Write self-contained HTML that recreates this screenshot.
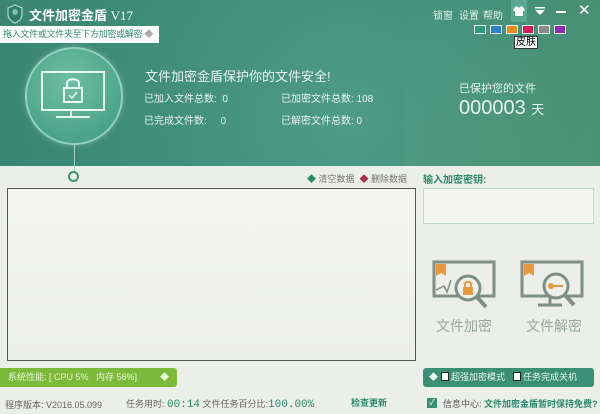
<!DOCTYPE html><html><head><meta charset="utf-8"><style>
*{margin:0;padding:0;box-sizing:border-box}
body{width:600px;height:414px;overflow:hidden;font-family:"Liberation Sans","Noto Sans CJK SC",sans-serif;background:#eceeea;position:relative;font-size:10px}
.a{position:absolute;white-space:nowrap}
.hdr{position:absolute;left:0;top:0;width:600px;height:166px;background:radial-gradient(circle at 350px 120px,#4f9c86 0,#3f8d77 60%,#3a8670 100%)}
.w{color:#e6f2ee}
.sw{position:absolute;top:25px;width:12px;height:9px;border:1px solid #e8f0ec}
</style></head><body>
<div class="hdr"></div>
<div class="a" style="left:404px;top:0;width:196px;height:166px;background:linear-gradient(120deg,rgba(255,255,255,0),rgba(120,170,120,.25))"></div>
<svg class="a" style="left:6px;top:4px" width="18" height="20" viewBox="0 0 18 20"><path d="M9 1L16 4V10C16 15 12 18 9 19C6 18 2 15 2 10V4Z" fill="#2f7d66" stroke="#a9d9c7" stroke-width="1.2"/><path d="M9 5C11 5 12 7 11.5 9C11 10.5 10 11 9 11C8 11 7 10.5 6.5 9C6 7 7 5 9 5Z" fill="#7fc4ab"/></svg>
<div class="a" style="left:29px;top:5px;font-size:13px;color:#fff;font-weight:bold">文件加密金盾 <span style="font-family:'Liberation Serif';font-weight:normal">V17</span></div>
<div class="a" style="left:0;top:26px;width:159px;height:17px;background:#fff;color:#2f8a6e;font-size:9px;line-height:17px;padding-left:3px;letter-spacing:-0.3px">拖入文件或文件夹至下方加密或解密 <span style="color:#aaa">◆</span></div>
<div class="a w" style="left:433px;top:7px;font-size:10px">锁窗</div>
<div class="a w" style="left:459px;top:7px;font-size:10px">设置</div>
<div class="a w" style="left:483px;top:7px;font-size:10px">帮助</div>
<div class="a" style="left:511px;top:0;width:16px;height:22px;background:#5aa890"></div>
<svg class="a" style="left:513px;top:6px" width="12" height="10" viewBox="0 0 12 10"><path d="M4 0L1 2L0 5L2 5V10H10V5L12 5L11 2L8 0C7 2 5 2 4 0Z" fill="#fff"/></svg>
<svg class="a" style="left:535px;top:7px" width="10" height="8" viewBox="0 0 10 8"><rect x="0" y="0" width="10" height="1.5" fill="#fff"/><path d="M0 3H10L5 8Z" fill="#fff"/></svg>
<div class="a" style="left:556px;top:11px;width:10px;height:2px;background:#fff"></div>
<div class="a w" style="left:578px;top:1px;font-size:15px;color:#fff">✕</div>
<div class="sw" style="left:474px;background:#2a9c7c"></div>
<div class="sw" style="left:490px;background:#2f7ec8"></div>
<div class="sw" style="left:506px;background:#e88a1c"></div>
<div class="sw" style="left:522px;background:#d61a5c"></div>
<div class="sw" style="left:538px;background:#8a8a8a"></div>
<div class="sw" style="left:554px;background:#8a2cb8"></div>
<div class="a" style="left:514px;top:36px;background:#fff;border:1px solid #333;font-size:10px;padding:0 1px;line-height:11px">皮肤</div>
<div class="a" style="left:74px;top:140px;width:1px;height:32px;background:#9fcfbf"></div>
<div class="a" style="left:68px;top:171px;width:11px;height:11px;border:2px solid #3f9479;border-radius:50%"></div>
<div class="a" style="left:25px;top:47px;width:98px;height:98px;border-radius:50%;background:radial-gradient(circle at 45% 35%,#6ebea3,#3e9a7e);border:2px solid #8ed2bb;box-shadow:0 0 6px rgba(255,255,255,.3)"></div>
<svg class="a" style="left:40px;top:70px" width="68" height="52" viewBox="0 0 68 52"><rect x="2" y="2" width="62" height="38" fill="none" stroke="#eaf6f1" stroke-width="2"/><line x1="31" y1="40" x2="31" y2="46" stroke="#eaf6f1" stroke-width="2"/><line x1="16" y1="47" x2="50" y2="47" stroke="#eaf6f1" stroke-width="2"/><rect x="24" y="18" width="18" height="14" fill="none" stroke="#eaf6f1" stroke-width="2"/><path d="M27 18V13C27 8 39 8 39 13V18" fill="none" stroke="#eaf6f1" stroke-width="2"/><path d="M29 25L32 28L37 22" fill="none" stroke="#eaf6f1" stroke-width="1.5"/></svg>
<div class="a w" style="left:145px;top:66px;font-size:13px">文件加密金盾保护你的文件安全!</div>
<div class="a w" style="left:144px;top:90px;font-size:10px">已加入文件总数: &nbsp;0</div>
<div class="a w" style="left:144px;top:112px;font-size:10px">已完成文件数: &nbsp;&nbsp;&nbsp;&nbsp;0</div>
<div class="a w" style="left:281px;top:90px;font-size:10px">已加密文件总数: 108</div>
<div class="a w" style="left:281px;top:112px;font-size:10px">已解密文件总数: 0</div>
<div class="a w" style="left:459px;top:80px;font-size:11px">已保护您的文件</div>
<div class="a w" style="left:459px;top:97px;font-size:20px">000003 <span style="font-size:13px">天</span></div>
<div class="a" style="left:307px;top:172px;font-size:9px;color:#777"><span style="color:#2a8a6c">◆</span> 清空数据 &nbsp;<span style="color:#b03050">◆</span> 删除数据</div>
<div class="a" style="left:423px;top:171px;font-size:10px;color:#2a8a6c;font-weight:bold">输入加密密钥:</div>
<div class="a" style="left:7px;top:188px;width:409px;height:173px;background:linear-gradient(180deg,#f4f5f2,#eceee8);border:1px solid #555"></div>
<div class="a" style="left:423px;top:188px;width:171px;height:36px;background:#f5f6f4;border:1px solid #c5d8cc"></div>
<svg class="a" style="left:432px;top:260px" width="68" height="50" viewBox="0 0 68 50"><path d="M2 2H62V36H2Z" fill="none" stroke="#7f8f87" stroke-width="3"/><path d="M4 4H14V16L9 13L4 16Z" fill="#e8983e"/><path d="M4 30L12 26L15 32L19 20" fill="none" stroke="#7f8f87" stroke-width="1.5"/><circle cx="36" cy="28" r="12" fill="#eef0ec" stroke="#7f8f87" stroke-width="3"/><line x1="45" y1="37" x2="54" y2="47" stroke="#7f8f87" stroke-width="4"/><rect x="31" y="27" width="10" height="8" fill="#e8983e"/><path d="M33 27V24C33 21 39 21 39 24V27" fill="none" stroke="#e8983e" stroke-width="2"/></svg>
<div class="a" style="left:436px;top:316px;font-size:14px;color:#9aa6a0">文件加密</div>
<svg class="a" style="left:520px;top:260px" width="68" height="52" viewBox="0 0 68 52"><path d="M2 2H62V36H2Z" fill="none" stroke="#7f8f87" stroke-width="3"/><line x1="30" y1="36" x2="30" y2="44" stroke="#7f8f87" stroke-width="3"/><line x1="18" y1="45" x2="42" y2="45" stroke="#7f8f87" stroke-width="3"/><path d="M4 4H14V16L9 13L4 16Z" fill="#e8983e"/><circle cx="36" cy="26" r="12" fill="#eef0ec" stroke="#7f8f87" stroke-width="3"/><line x1="45" y1="35" x2="54" y2="45" stroke="#7f8f87" stroke-width="4"/><circle cx="31" cy="26" r="3" fill="#e8983e"/><line x1="33" y1="26" x2="43" y2="26" stroke="#e8983e" stroke-width="2"/></svg>
<div class="a" style="left:526px;top:316px;font-size:14px;color:#9aa6a0">文件解密</div>
<div class="a" style="left:0;top:368px;width:177px;height:19px;background:#7cba3c;border-radius:0 3px 3px 0;color:#eaf6da;font-size:9px;line-height:19px;padding-left:8px">系统性能: [ CPU 5% &nbsp; 内存 56%] <span style="position:absolute;right:8px">◆</span></div>
<div class="a" style="left:423px;top:368px;width:171px;height:19px;background:#3a9074;border-radius:3px;color:#eaf4ef;font-size:9px;line-height:19px;padding-left:6px">◆ <span style="display:inline-block;width:8px;height:9px;background:#fff;border:1px solid #222;vertical-align:-1px"></span> 超强加密模式 &nbsp;&nbsp;<span style="display:inline-block;width:8px;height:9px;background:#fff;border:1px solid #222;vertical-align:-1px"></span> 任务完成关机</div>
<div class="a" style="left:5px;top:398px;font-size:9px;color:#666">程序版本: V2016.05.099</div>
<div class="a" style="left:126px;top:397px;font-size:9px;color:#666">任务用时: <span style="color:#2a8a6c;font-family:'Liberation Mono';font-size:11px">00:14</span> 文件任务百分比:<span style="color:#2a8a6c;font-family:'Liberation Mono';font-size:11px">100.00%</span></div>
<div class="a" style="left:351px;top:396px;font-size:9px;color:#2a8a6c;font-weight:bold">检查更新</div>
<div class="a" style="left:427px;top:398px;width:10px;height:10px;background:#3a9074;color:#fff;font-size:8px;line-height:10px;text-align:center">✓</div>
<div class="a" style="left:443px;top:397px;font-size:9px;color:#555">信息中心: <span style="color:#2a8a6c;font-weight:bold">文件加密金盾暂时保持免费?</span></div>
</body></html>
